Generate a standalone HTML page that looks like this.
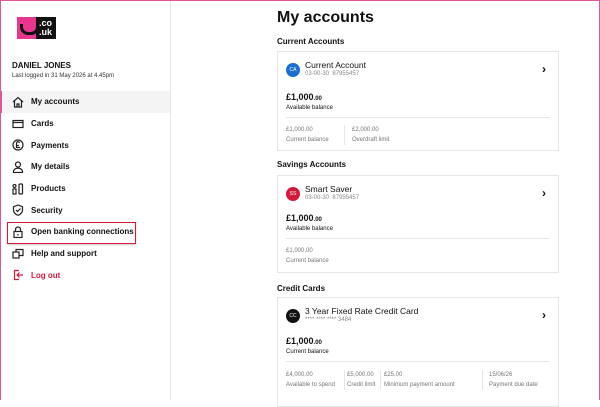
<!DOCTYPE html><html><head><style>
*{margin:0;padding:0;box-sizing:border-box}
body{width:600px;height:400px;overflow:hidden;font-family:"Liberation Sans",sans-serif;color:#111;background:#fff;position:relative}
.frame{position:absolute;inset:0;border:1px solid #e0569a;border-bottom:none;pointer-events:none;z-index:9}
.side{position:absolute;left:0;top:0;width:171px;height:400px;border-right:1px solid #e6e6e6}
.logo{position:absolute;left:17px;top:17px;width:39px;height:22px;display:flex}
.logo .p{width:19px;background:#e8368f;position:relative}
.logo .p:after{content:"";position:absolute;left:3px;top:7px;width:13px;height:8px;border:3px solid #111;border-top:none;border-radius:0 0 8px 8px}
.logo .b{width:20px;background:#111;color:#fff;font-size:9px;font-weight:bold;line-height:9px;padding:2px 0 0 3px}
.name{position:absolute;left:12px;top:61px;font-size:8px;font-weight:bold}
.last{position:absolute;left:12px;top:73px;font-size:6px;color:#333}
.nav{position:absolute;left:0;top:91px;width:170px}
.it{height:21.7px;display:flex;align-items:center;padding-left:12px;font-size:8px;font-weight:bold;position:relative}
.it svg{width:12px;height:12px;margin-right:7px;fill:none;stroke:#222;stroke-width:1.2}
.act{background:#f3f4f3}
.act:before{content:"";position:absolute;left:0;top:0;bottom:0;width:2px;background:#e0569a}
.red{color:#d6193a}.red svg{stroke:#d6193a}
.box{position:absolute;left:7px;top:222px;width:129px;height:22px;border:1px solid #d6193a;box-shadow:0 1px 2px rgba(0,0,0,.2)}
h1{position:absolute;left:277px;top:9px;font-size:16px;font-weight:bold}
h2{position:absolute;left:277px;font-size:8px;font-weight:bold}
.card{position:absolute;left:277px;width:282px;border:1px solid #e6e6e6;background:#fff}
.ic{position:absolute;left:8px;top:11px;width:14px;height:14px;border-radius:50%;color:#fff;font-size:5px;text-align:center;line-height:14px}
.t{position:absolute;left:27px;top:8px;font-size:8.5px}
.s{position:absolute;left:27px;top:19px;font-size:6px;color:#888}
.ch{position:absolute;right:12px;top:10px;font-size:12px;font-weight:bold}
.amt{position:absolute;left:8px;font-size:9px;font-weight:bold}
.amt small{font-size:6px}
.lbl{position:absolute;left:8px;font-size:6px}
.hr{position:absolute;left:8px;right:8px;height:1px;background:#e6e6e6}
.c{position:absolute;font-size:6px;color:#777;line-height:10px;white-space:nowrap}
.v{position:absolute;width:1px;height:20px;background:#e6e6e6}
</style></head><body>
<div class="frame"></div>
<div class="side">
<div class="logo"><div class="p"></div><div class="b">.co<br>.uk</div></div>
<div class="name">DANIEL JONES</div>
<div class="last">Last logged in 31 May 2026 at 4.45pm</div>
<div class="nav">
<div class="it act"><svg viewBox="0 0 12 12"><path d="M1 6L6 1.5 11 6M2.5 5v6h7V5M5 11V8h2v3"/></svg>My accounts</div>
<div class="it"><svg viewBox="0 0 12 12"><rect x="1" y="2.5" width="10" height="7"/><path d="M1 4.5h10"/></svg>Cards</div>
<div class="it"><svg viewBox="0 0 12 12"><circle cx="6" cy="6" r="5"/><path d="M7.5 4a1.5 1.5 0 0 0-3 .5V8.5M4 8.5h4M3.8 6.5h3"/></svg>Payments</div>
<div class="it"><svg viewBox="0 0 12 12"><circle cx="6" cy="3.5" r="2.5"/><path d="M1.5 11.5v-1a4 3 0 0 1 9 0v1z"/></svg>My details</div>
<div class="it"><svg viewBox="0 0 12 12"><circle cx="2.5" cy="3" r="1.5"/><rect x="1" y="6" width="3" height="5"/><rect x="7" y="1" width="3.5" height="10" rx="1"/></svg>Products</div>
<div class="it"><svg viewBox="0 0 12 12"><path d="M6 1l4.5 1.8V6c0 3-2.5 4.5-4.5 5.3C4 10.5 1.5 9 1.5 6V2.8z M4 6l1.5 1.5L8.5 4.5"/></svg>Security</div>
<div class="it"><svg viewBox="0 0 12 12"><rect x="2" y="5.5" width="8" height="6"/><path d="M3.5 5.5V3.5a2.5 2.5 0 0 1 5 0v2M6 8v1.5"/></svg>Open banking connections</div>
<div class="it"><svg viewBox="0 0 12 12"><rect x="1" y="4" width="6" height="6"/><path d="M4 4V1.5h7v6H7"/></svg>Help and support</div>
<div class="it red"><svg viewBox="0 0 12 12"><path d="M7 1.5H2.5v9H7M5 6h6M7.5 3.5L5 6l2.5 2.5"/></svg>Log out</div>
</div>
<div class="box"></div>
</div>
<h1>My accounts</h1>
<h2 style="top:37px">Current Accounts</h2>
<div class="card" style="top:51px;height:100px">
<div class="ic" style="background:#1a6fd1">CA</div><div class="t">Current Account</div><div class="s">03-00-30&nbsp;&nbsp;87955457</div><div class="ch">›</div>
<div class="amt" style="top:40px">£1,000<small>.00</small></div><div class="lbl" style="top:53px">Available balance</div>
<div class="hr" style="top:65px"></div>
<div class="c" style="top:73px;left:8px">£1,000.00<br>Current balance</div><div class="v" style="top:73px;left:66px"></div><div class="c" style="top:73px;left:74px">£2,000.00<br>Overdraft limit</div>
</div>
<h2 style="top:160px">Savings Accounts</h2>
<div class="card" style="top:175px;height:98px">
<div class="ic" style="background:#d6193a">SS</div><div class="t">Smart Saver</div><div class="s">03-00-30&nbsp;&nbsp;87955457</div><div class="ch">›</div>
<div class="amt" style="top:37px">£1,000<small>.00</small></div><div class="lbl" style="top:50px">Available balance</div>
<div class="hr" style="top:62px"></div>
<div class="c" style="top:70px;left:8px">£1,000.00<br>Current balance</div>
</div>
<h2 style="top:284px">Credit Cards</h2>
<div class="card" style="top:297px;height:110px">
<div class="ic" style="background:#111">CC</div><div class="t">3 Year Fixed Rate Credit Card</div><div class="s">**** **** **** 3484</div><div class="ch">›</div>
<div class="amt" style="top:38px">£1,000<small>.00</small></div><div class="lbl" style="top:51px">Current balance</div>
<div class="hr" style="top:63px"></div>
<div class="c" style="top:72px;left:8px">£4,000.00<br>Available to spend</div>
<div class="v" style="top:72px;left:66px"></div>
<div class="c" style="top:72px;left:69px">£5,000.00<br>Credit limit</div>
<div class="v" style="top:72px;left:102px"></div>
<div class="c" style="top:72px;left:106px">£25.00<br>Minimum payment amount</div>
<div class="v" style="top:72px;left:204px"></div>
<div class="c" style="top:72px;left:211px">15/06/26<br>Payment due date</div>
</div>
</body></html>
